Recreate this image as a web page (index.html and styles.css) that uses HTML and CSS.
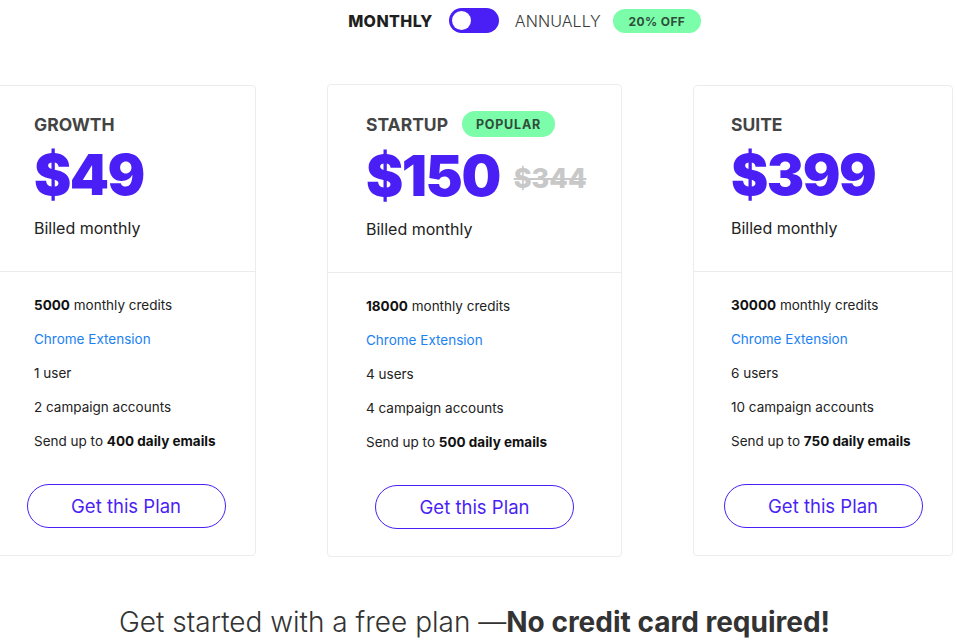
FILE: index.html
```html
<!DOCTYPE html>
<html>
<head>
<meta charset="utf-8">
<link rel="stylesheet" href="styles.css">
</head>
<body>
<div class="page">
  <div class="billing">
    <div class="billing-group">
      <span class="period period-active">MONTHLY</span>
      <span class="switch"><span class="knob"></span></span>
      <span class="period">ANNUALLY</span>
      <span class="badge badge-off">20% OFF</span>
    </div>
  </div>

  <div class="plans">
    <div class="plan plan-side">
      <div class="plan-head">
        <div class="plan-title-row"><span class="plan-title">GROWTH</span></div>
        <div class="price-row"><span class="price">$49</span></div>
        <div class="billed">Billed monthly</div>
      </div>
      <div class="plan-body">
        <ul class="features">
          <li><b>5000</b> monthly credits</li>
          <li class="link">Chrome Extension</li>
          <li>1 user</li>
          <li>2 campaign accounts</li>
          <li>Send up to <b>400 daily emails</b></li>
        </ul>
        <div class="cta-wrap"><button class="cta">Get this Plan</button></div>
      </div>
    </div>

    <div class="plan plan-main">
      <div class="plan-head">
        <div class="plan-title-row"><span class="plan-title">STARTUP</span><span class="badge badge-popular">POPULAR</span></div>
        <div class="price-row"><span class="price">$150</span><span class="old-price">$344</span></div>
        <div class="billed">Billed monthly</div>
      </div>
      <div class="plan-body">
        <ul class="features">
          <li><b>18000</b> monthly credits</li>
          <li class="link">Chrome Extension</li>
          <li>4 users</li>
          <li>4 campaign accounts</li>
          <li>Send up to <b>500 daily emails</b></li>
        </ul>
        <div class="cta-wrap"><button class="cta">Get this Plan</button></div>
      </div>
    </div>

    <div class="plan plan-side">
      <div class="plan-head">
        <div class="plan-title-row"><span class="plan-title">SUITE</span></div>
        <div class="price-row"><span class="price">$399</span></div>
        <div class="billed">Billed monthly</div>
      </div>
      <div class="plan-body">
        <ul class="features">
          <li><b>30000</b> monthly credits</li>
          <li class="link">Chrome Extension</li>
          <li>6 users</li>
          <li>10 campaign accounts</li>
          <li>Send up to <b>750 daily emails</b></li>
        </ul>
        <div class="cta-wrap"><button class="cta">Get this Plan</button></div>
      </div>
    </div>
  </div>

  <p class="free-note">Get started with a free plan —<b>No credit card required!</b></p>
</div>
</body>
</html>
```

FILE: styles.css
```css
* { box-sizing: border-box; }
html, body { margin: 0; padding: 0; background: #fff; overflow: hidden; }
body {
  font-family: "Inter", "Noto Sans", sans-serif;
  color: #222;
  width: 957px;
  height: 644px;
}
.page {
  width: 949px;
}
.billing {
  height: 42px;
  display: flex;
  justify-content: center;
  padding-top: 8px;
}
.billing-group {
  position: relative;
  display: flex;
  align-items: center;
  height: 25px;
  gap: 16px;
}
.period {
  font-size: 16px;
  font-weight: 300;
  color: #3a3a3a;
  letter-spacing: 0.1px;
}
.period-active {
  font-weight: 800;
  color: #1f1f1f;
  letter-spacing: 0.4px;
}
.switch {
  width: 50px;
  height: 25px;
  border-radius: 13px;
  background: #4a1ff5;
  display: flex;
  align-items: center;
  padding-left: 3px;
}
.knob {
  width: 19px;
  height: 19px;
  border-radius: 50%;
  background: #fff;
}
.badge {
  display: inline-flex;
  align-items: center;
  justify-content: center;
  background: #7bfdaa;
  border-radius: 13px;
  font-weight: 700;
  color: #2f4d3a;
}
.badge-off {
  position: absolute;
  left: calc(100% + 12px);
  top: 1px;
  width: 88px;
  height: 24px;
  font-size: 12px;
  letter-spacing: 0.4px;
}
.plans {
  margin-top: 42px;
  display: flex;
  justify-content: center;
  align-items: center;
  gap: 71px;
}
.plan {
  flex: none;
  border: 1px solid #ececec;
  border-radius: 4px;
  background: #fff;
}
.plan-side { width: 260px; }
.plan-main { width: 295px; }
.plan-head {
  padding: 26px 37px 31px;
  border-bottom: 1px solid #ececec;
}
.plan-main .plan-head { padding-left: 38px; padding-right: 38px; }
.plan-title-row {
  display: flex;
  align-items: center;
  gap: 14px;
  height: 24px;
}
.plan-main .plan-title-row { height: 26px; }
.plan-title {
  font-size: 17.5px;
  font-weight: 700;
  color: #444;
}
.badge-popular {
  width: 93px;
  height: 26px;
  font-size: 12.5px;
  letter-spacing: 0.8px;
}
.price-row {
  display: flex;
  align-items: center;
  gap: 14px;
  margin-top: 9px;
  height: 60px;
}
.price {
  font-size: 56px;
  line-height: 60px;
  font-weight: 900;
  color: #4a1ff5;
  letter-spacing: -1.5px;
}
.old-price {
  font-size: 27px;
  font-weight: 800;
  color: #c8c8c8;
  text-decoration: line-through;
  text-decoration-thickness: 2px;
  margin-top: 4px;
}
.billed {
  margin-top: 11px;
  font-size: 16px;
  line-height: 24px;
  font-weight: 400;
  color: #222;
}
.plan-body {
  padding: 23px 37px 27px;
}
.plan-main .plan-body { padding-left: 38px; padding-right: 38px; }
.features {
  list-style: none;
  margin: 0;
  padding: 0;
}
.features li {
  font-size: 13.5px;
  line-height: 20px;
  height: 34px;
  color: #222;
  white-space: nowrap;
}
.features b { font-weight: 700; color: #111; }
.features .link { color: #1b82f2; }
.cta-wrap {
  display: flex;
  justify-content: center;
  margin-top: 19px;
}
.cta {
  flex: none;
  width: 199px;
  height: 44px;
  border: 1px solid #4a1ff5;
  border-radius: 22px;
  background: #fff;
  color: #4a1ff5;
  font-family: inherit;
  font-size: 18.5px;
  font-weight: 400;
  cursor: pointer;
}
.free-note {
  margin: 48px 0 0;
  text-align: center;
  font-size: 28px;
  font-weight: 300;
  color: #333;
}
.free-note b { font-weight: 700; color: #333; }
```
